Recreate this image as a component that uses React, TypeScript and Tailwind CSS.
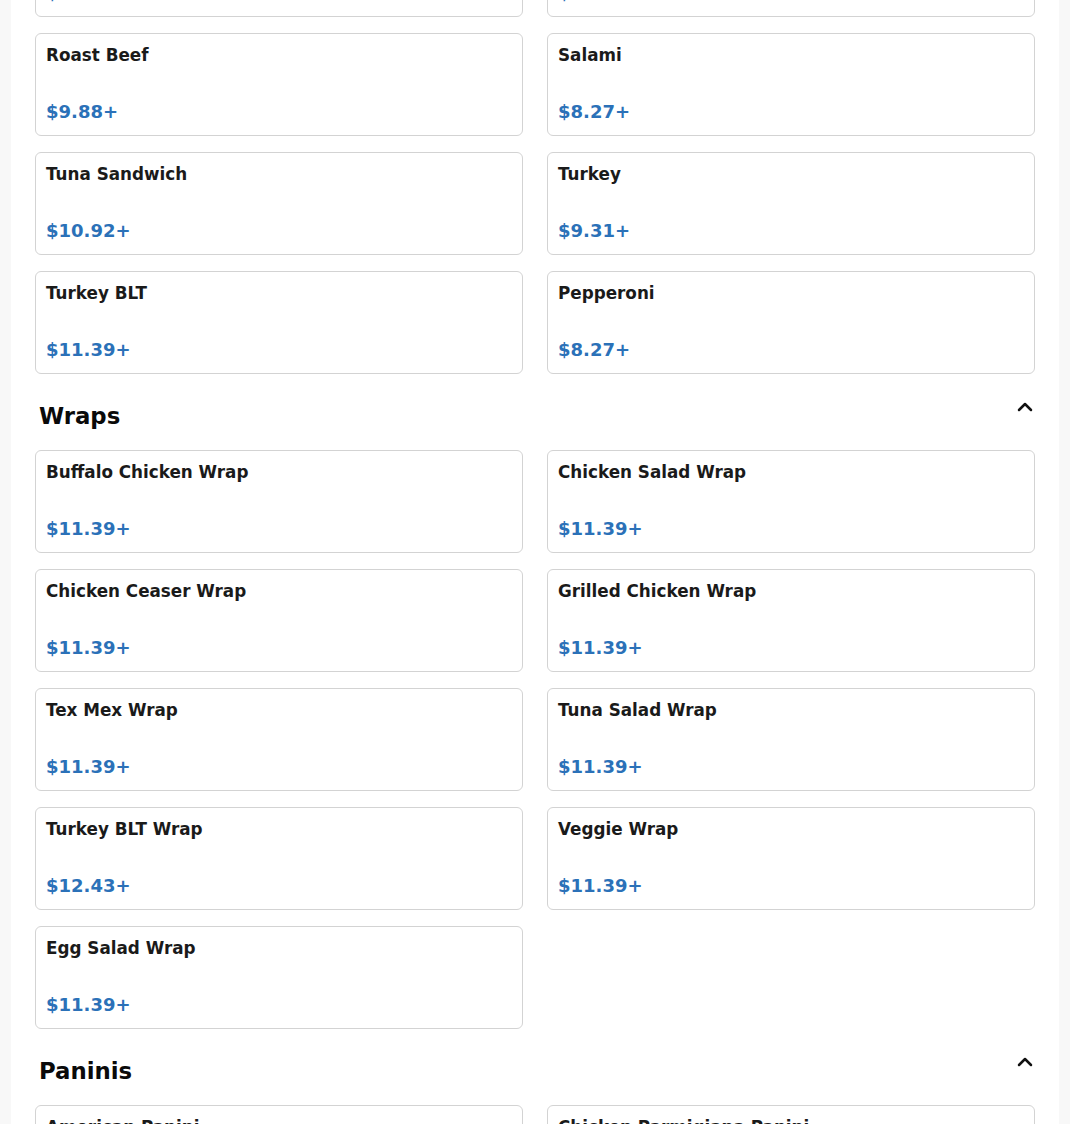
import { ChevronUp } from "lucide-react"

type Item = { name: string; price: string }

const sections: { title: string | null; items: Item[] }[] = [
  {
    title: null,
    items: [
      { name: "Ham", price: "$8.27+" },
      { name: "Italian", price: "$9.31+" },
      { name: "Roast Beef", price: "$9.88+" },
      { name: "Salami", price: "$8.27+" },
      { name: "Tuna Sandwich", price: "$10.92+" },
      { name: "Turkey", price: "$9.31+" },
      { name: "Turkey BLT", price: "$11.39+" },
      { name: "Pepperoni", price: "$8.27+" },
    ],
  },
  {
    title: "Wraps",
    items: [
      { name: "Buffalo Chicken Wrap", price: "$11.39+" },
      { name: "Chicken Salad Wrap", price: "$11.39+" },
      { name: "Chicken Ceaser Wrap", price: "$11.39+" },
      { name: "Grilled Chicken Wrap", price: "$11.39+" },
      { name: "Tex Mex Wrap", price: "$11.39+" },
      { name: "Tuna Salad Wrap", price: "$11.39+" },
      { name: "Turkey BLT Wrap", price: "$12.43+" },
      { name: "Veggie Wrap", price: "$11.39+" },
      { name: "Egg Salad Wrap", price: "$11.39+" },
    ],
  },
  {
    title: "Paninis",
    items: [
      { name: "American Panini", price: "$11.39+" },
      { name: "Chicken Parmigiana Panini", price: "$12.43+" },
      { name: "Italian Panini", price: "$11.39+" },
      { name: "Turkey Panini", price: "$11.39+" },
    ],
  },
]

function MenuCard({ item }: { item: Item }) {
  return (
    <div className="h-[103px] rounded-md border border-[#d3d3d3] bg-white px-[10px] pt-[11px] pb-[13px] flex flex-col justify-between">
      <div className="text-[16.8px] leading-[20px] font-bold text-[#1a1a1a]">{item.name}</div>
      <div className="text-[18px] leading-[21px] font-bold text-[#2b71b8]">{item.price}</div>
    </div>
  )
}

export default function App() {
  return (
    <div className="min-h-screen bg-[#f8f8f8] overflow-hidden" style={{ fontFamily: '"DejaVu Sans", Verdana, sans-serif' }}>
      <div className="mx-auto w-[1048px] bg-white px-6 pb-10">
        {sections.map((section, i) => (
          <section key={i} className={i === 0 ? "-mt-[86px]" : "mt-6"}>
            {section.title && (
              <div className="flex items-start justify-between mb-[21px]">
                <h2 className="pl-1 pt-[5px] text-[22.8px] leading-[26px] font-bold text-[#0a0a0a]">{section.title}</h2>
                <button className="-mt-[3px] -mr-[2px] text-[#111]">
                  <ChevronUp size={24} strokeWidth={2.5} />
                </button>
              </div>
            )}
            <div className="grid grid-cols-2 gap-x-6 gap-y-4">
              {section.items.map((item) => (
                <MenuCard key={item.name} item={item} />
              ))}
            </div>
          </section>
        ))}
      </div>
    </div>
  )
}
